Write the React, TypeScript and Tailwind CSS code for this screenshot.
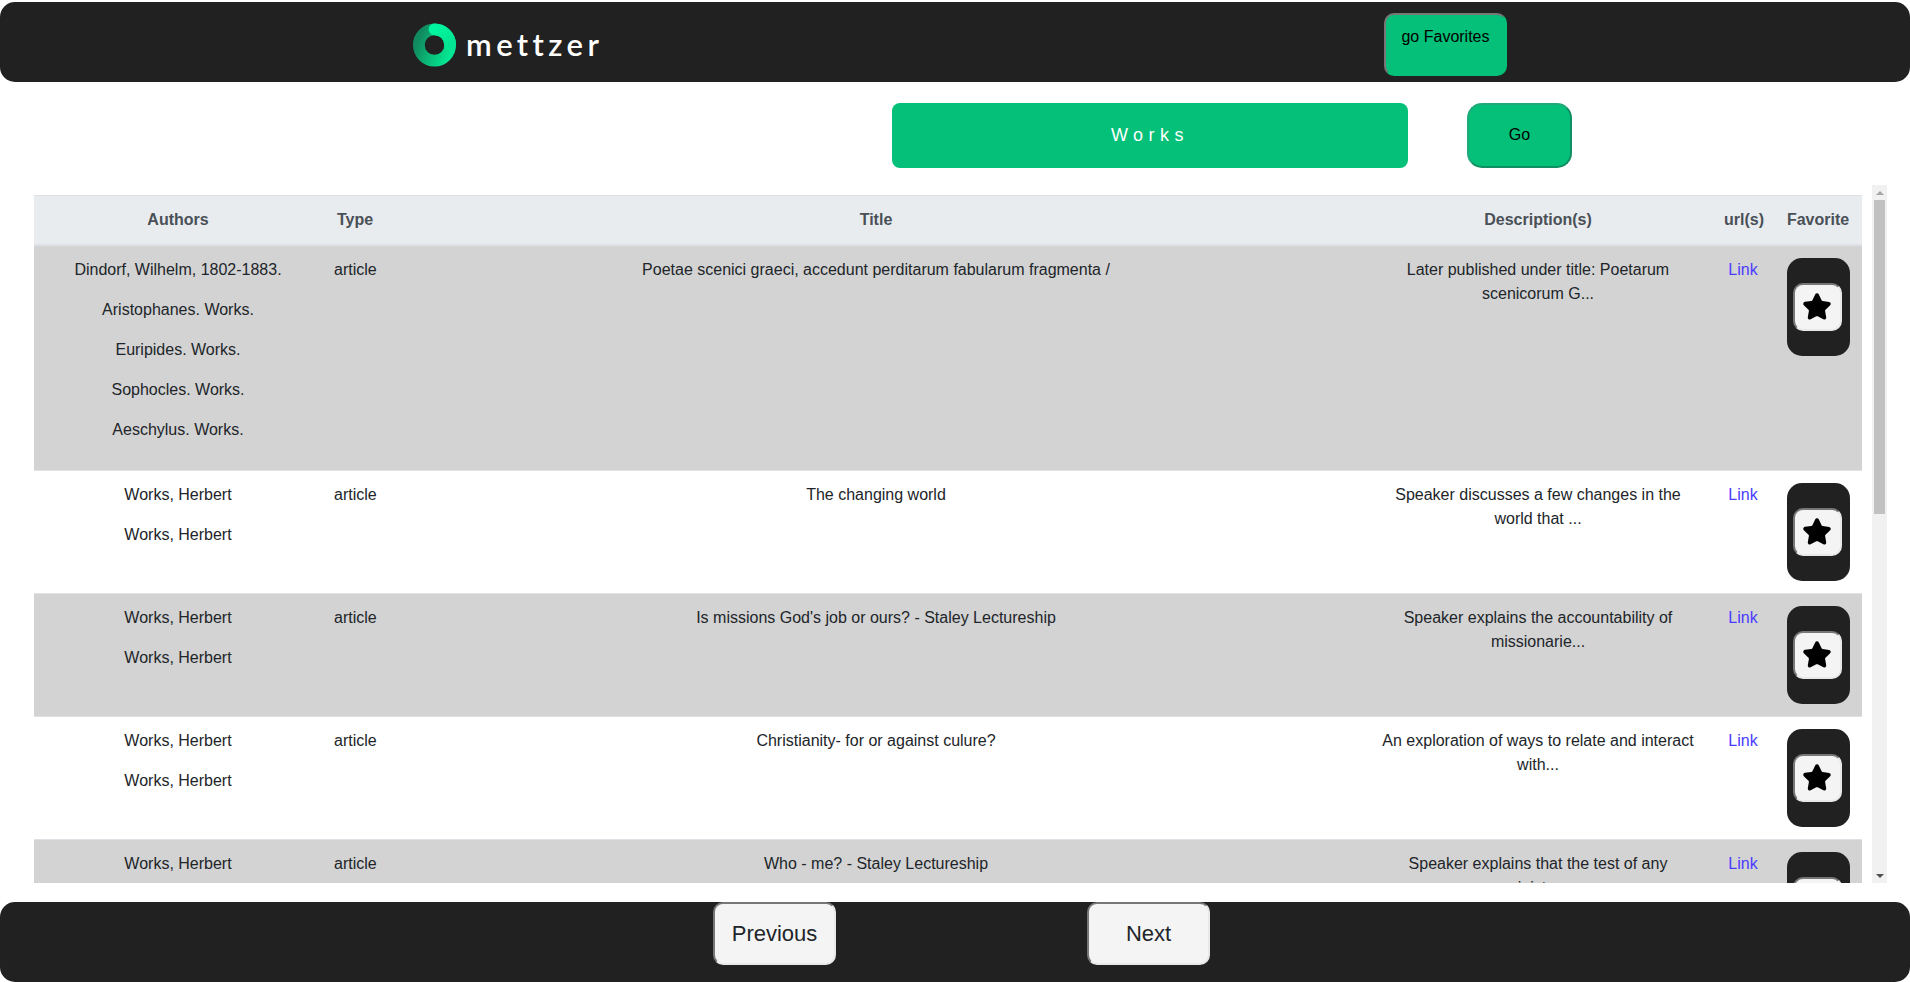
import React from 'react';
import { Star } from 'lucide-react';

const rows = [
    {
        authors: ['Dindorf, Wilhelm, 1802-1883.', 'Aristophanes. Works.', 'Euripides. Works.', 'Sophocles. Works.', 'Aeschylus. Works.'],
        title: 'Poetae scenici graeci, accedunt perditarum fabularum fragmenta /',
        description: 'Later published under title: Poetarum scenicorum G...',
    },
    {
        authors: ['Works, Herbert', 'Works, Herbert'],
        title: 'The changing world',
        description: 'Speaker discusses a few changes in the world that ...',
    },
    {
        authors: ['Works, Herbert', 'Works, Herbert'],
        title: "Is missions God's job or ours? - Staley Lectureship",
        description: 'Speaker explains the accountability of missionarie...',
    },
    {
        authors: ['Works, Herbert', 'Works, Herbert'],
        title: 'Christianity- for or against culure?',
        description: 'An exploration of ways to relate and interact with...',
    },
    {
        authors: ['Works, Herbert', 'Works, Herbert'],
        title: 'Who - me? - Staley Lectureship',
        description: 'Speaker explains that the test of any ministry...',
    },
];

const headers = ['Authors', 'Type', 'Title', 'Description(s)', 'url(s)', 'Favorite'];

const Logo = () => (
    <svg width="43" height="44" viewBox="0 0 44 44" className="shrink-0">
        <defs>
            <linearGradient id="ring" x1="0" y1="0.3" x2="1" y2="0.7">
                <stop offset="0" stopColor="#118a60" />
                <stop offset="0.6" stopColor="#08c57d" />
                <stop offset="1" stopColor="#03e592" />
            </linearGradient>
            <linearGradient id="cap" x1="0" y1="0" x2="0.6" y2="1">
                <stop offset="0" stopColor="#00f5a0" />
                <stop offset="1" stopColor="#03e592" />
            </linearGradient>
        </defs>
        <circle cx="22" cy="22" r="16" fill="none" stroke="url(#ring)" strokeWidth="12" />
        <path d="M22 6 A16 16 0 0 1 38 22" fill="none" stroke="url(#cap)" strokeWidth="12" strokeLinecap="round" />
    </svg>
);

export default function App() {
    return (
        <div className="h-[982px] overflow-hidden bg-white text-[#212529] text-base font-['Liberation_Sans',Arial,sans-serif]">
            {/* Top bar */}
            <header className="mt-[2px] h-[80px] bg-[#212121] rounded-[15px] flex items-start">
                <div className="ml-[413px] mt-[21px] w-[188px] flex items-center gap-[10px]">
                    <Logo />
                    <span className="text-white text-[31px] font-semibold tracking-[4.4px] leading-none pb-[2px] font-['Lato',sans-serif]">mettzer</span>
                </div>
                <button className="ml-[783px] mt-[11px] w-[123px] h-[63px] pb-[16px] rounded-[10px] bg-[#04c078] text-black border-2 border-t-[#777777] border-l-[#777777] border-r-[#04c078] border-b-[#04c078]">
                    go Favorites
                </button>
            </header>

            {/* Search */}
            <div className="h-[103px] pt-[21px] flex items-start">
                <div className="ml-[892px] w-[516px] h-[65px] pb-[2px] rounded-[8px] bg-[#04c078] text-white text-lg tracking-[5.5px] flex items-center justify-center">
                    Works
                </div>
                <button className="ml-[59px] w-[105px] h-[65px] pb-[2px] rounded-[15px] bg-[#04c078] text-black border-2 border-t-[#22a97b] border-l-[#22a97b] border-r-[#0f8f62] border-b-[#0f8f62]">
                    Go
                </button>
            </div>

            {/* Results */}
            <div className="ml-[34px] h-[698px] flex">
                <div className="w-[1838px] overflow-hidden pt-[10px] pr-[10px]">
                    <table className="w-full table-fixed border-collapse text-center">
                        <colgroup>
                            <col className="w-[288px]" />
                            <col className="w-[66px]" />
                            <col className="w-[976px]" />
                            <col className="w-[348px]" />
                            <col className="w-[62px]" />
                            <col className="w-[88px]" />
                        </colgroup>
                        <thead>
                            <tr className="bg-[#e9ecef] text-[#495057]">
                                {headers.map((h) => (
                                    <th key={h} className="p-[12px] font-bold border-t border-b-2 border-[#dee2e6] whitespace-nowrap">{h}</th>
                                ))}
                            </tr>
                        </thead>
                        <tbody>
                            {rows.map((row, i) => (
                                <tr key={i} className={`align-top ${i % 2 === 0 ? 'bg-[#d3d3d3]' : 'bg-white'}`}>
                                    <td className="p-[12px] border-t border-[#dee2e6]">
                                        {row.authors.map((a, j) => (
                                            <p key={j} className="mb-[16px]">{a}</p>
                                        ))}
                                    </td>
                                    <td className="p-[12px] border-t border-[#dee2e6]">article</td>
                                    <td className="p-[12px] border-t border-[#dee2e6]">{row.title}</td>
                                    <td className="p-[12px] border-t border-[#dee2e6]">{row.description}</td>
                                    <td className="p-[12px] border-t border-[#dee2e6]">
                                        <a href="#" className="text-[#4a3cff]">Link</a>
                                    </td>
                                    <td className="p-[12px] border-t border-[#dee2e6]">
                                        <div className="w-[63px] h-[98px] mx-auto pl-[6px] rounded-[15px] bg-[#212121] flex items-center">
                                            <button className="w-[49px] h-[48px] rounded-[10px] bg-[#f4f4f4] border-2 border-t-[#777777] border-l-[#777777] border-r-[#e8e8e8] border-b-[#e8e8e8] flex items-center justify-center">
                                                <Star size={30} fill="#000" stroke="#000" strokeWidth={2} />
                                            </button>
                                        </div>
                                    </td>
                                </tr>
                            ))}
                        </tbody>
                    </table>
                </div>

                {/* Scrollbar */}
                <div className="w-[15px] bg-[#f1f1f1] flex flex-col items-center">
                    <div className="h-[15px] flex items-center justify-center">
                        <div className="w-0 h-0 border-x-[4px] border-x-transparent border-b-[4px] border-b-[#a3a3a3]" />
                    </div>
                    <div className="w-[11px] h-[314px] bg-[#c1c1c1]" />
                    <div className="flex-1" />
                    <div className="h-[15px] flex items-center justify-center">
                        <div className="w-0 h-0 border-x-[4px] border-x-transparent border-t-[4px] border-t-[#505050]" />
                    </div>
                </div>
            </div>

            {/* Pagination */}
            <footer className="mt-[19px] h-[80px] bg-[#212121] rounded-[15px] flex items-start">
                <button className="ml-[713px] w-[123px] h-[63px] rounded-[10px] bg-[#f4f4f4] text-[#212529] text-[22px] border-2 border-t-[#777777] border-l-[#777777] border-r-[#e8e8e8] border-b-[#e8e8e8]">
                    Previous
                </button>
                <button className="ml-[251px] w-[123px] h-[63px] rounded-[10px] bg-[#f4f4f4] text-[#212529] text-[22px] border-2 border-t-[#777777] border-l-[#777777] border-r-[#e8e8e8] border-b-[#e8e8e8]">
                    Next
                </button>
            </footer>
        </div>
    );
}
